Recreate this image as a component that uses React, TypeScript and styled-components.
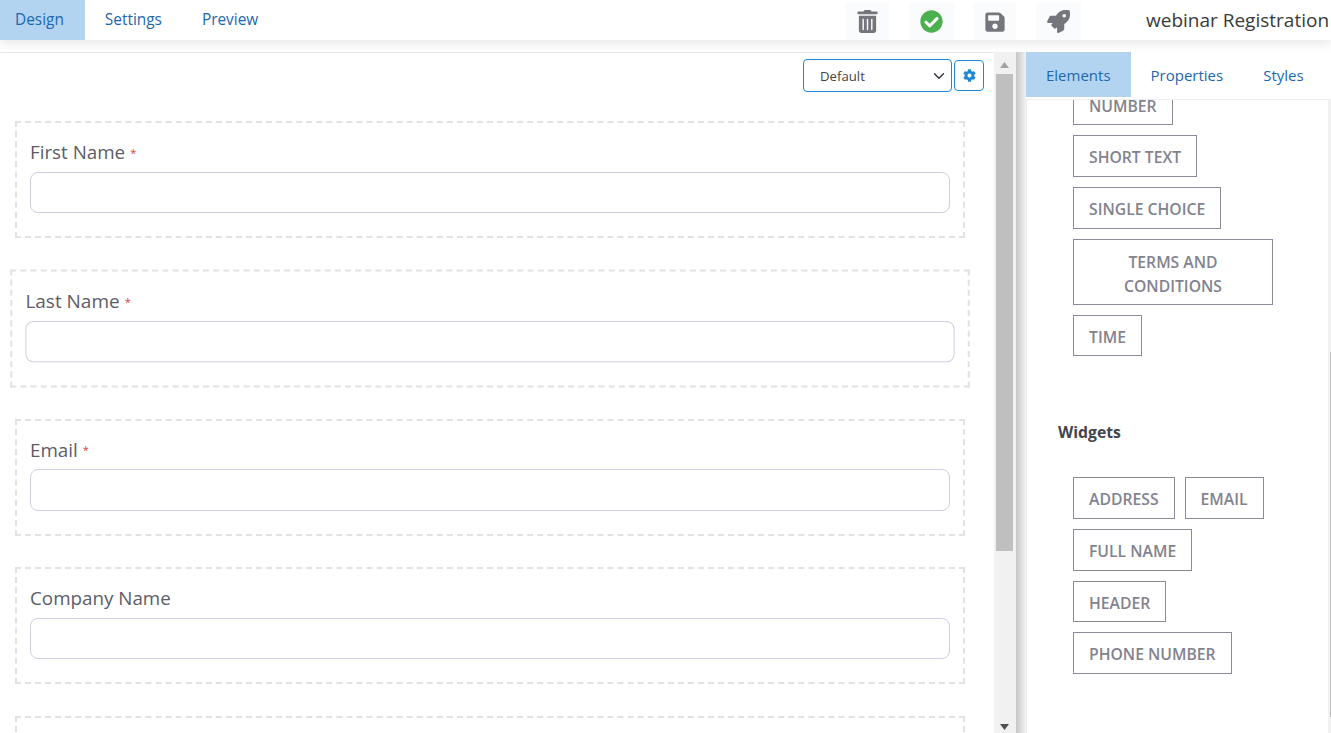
import React from "react";
import styled, { createGlobalStyle } from "styled-components";
import { FaTrashAlt, FaCheckCircle, FaSave, FaRocket, FaCog } from "react-icons/fa";

const Global = createGlobalStyle`
  html, body { margin: 0; padding: 0; height: 100%; overflow: hidden; background: #fff; }
  * { box-sizing: border-box; }
  body { font-family: "Open Sans", "Noto Sans", sans-serif; }
`;

const Page = styled.div`
  width: 1331px;
  height: 733px;
  display: flex;
  flex-direction: column;
  overflow: hidden;
`;

const TopBar = styled.header`
  height: 40px;
  flex: none;
  display: flex;
  align-items: stretch;
  background: #fff;
  box-shadow: 0 4px 10px rgba(0, 0, 0, 0.09);
  position: relative;
  z-index: 2;
`;

const TabButton = styled.div<{ $active?: boolean; $left?: number; $right?: number; $size?: number; $lift?: number }>`
  display: flex;
  align-items: center;
  padding: 0 ${(p) => p.$right ?? 20}px ${(p) => p.$lift ?? 0}px ${(p) => p.$left ?? 20}px;
  background: ${(p) => (p.$active ? "#b3d4f0" : "transparent")};
  color: #1c68ae;
  font-size: ${(p) => p.$size ?? 15}px;
  white-space: nowrap;
`;

const IconGroup = styled.div`
  margin-left: auto;
  display: flex;
  gap: 20px;
  padding-top: 3px;
`;

const IconButton = styled.div<{ $w: number; $color: string; $size: number }>`
  width: ${(p) => p.$w}px;
  height: 37px;
  display: flex;
  align-items: center;
  justify-content: center;
  background: #fafbfd;
  color: ${(p) => p.$color};
  font-size: ${(p) => p.$size}px;
`;

const Title = styled.div`
  margin-left: 65px;
  width: 185px;
  flex: none;
  display: flex;
  align-items: center;
  font-size: 19px;
  color: #3a3a3a;
  white-space: nowrap;
`;

const Workspace = styled.div`
  flex: 1;
  min-height: 0;
  margin-top: 12px;
  display: flex;
`;

const Canvas = styled.section`
  width: 994px;
  flex: none;
  border-top: 1px solid #e8e8e8;
  overflow: hidden;
`;

const CanvasTools = styled.div`
  display: flex;
  justify-content: flex-end;
  align-items: flex-start;
  gap: 2px;
  padding: 7px 10px 0 0;
  height: 68.3px;
`;

const chevron =
  "data:image/svg+xml,%3csvg xmlns='http://www.w3.org/2000/svg' viewBox='0 0 16 16'%3e%3cpath fill='none' stroke='%23343a40' stroke-linecap='round' stroke-linejoin='round' stroke-width='2' d='M2 5l6 6 6-6'/%3e%3c/svg%3e";

const LayoutSelect = styled.select`
  width: 149px;
  height: 33px;
  margin-top: -1px;
  padding: 0 0 0 16px;
  border: 1px solid #1f88d6;
  border-radius: 4px;
  appearance: none;
  background: #fff url("${chevron}") no-repeat right 4px center / 16px 12px;
  color: #444;
  font-family: inherit;
  font-size: 13.2px;
  outline: none;
`;

const GearButton = styled.div`
  width: 30px;
  height: 31px;
  border: 1px solid #1f88d6;
  border-radius: 4px;
  display: flex;
  align-items: center;
  justify-content: center;
  color: #1f88d6;
  font-size: 13px;
`;

const FieldCard = styled.div<{ $selected?: boolean }>`
  width: 950px;
  height: 116.9px;
  margin: 0 0 31.8px 15px;
  padding: 13px 13px 0;
  border: 2px dashed #e2e2e2;
  background: #fff;
  transform: ${(p) => (p.$selected ? "scale(1.01)" : "none")};
`;

const FieldLabel = styled.div`
  height: 32px;
  margin-bottom: 3.6px;
  display: flex;
  align-items: center;
  gap: 5px;
  font-size: 18.8px;
  color: #5c5c68;
`;

const Required = styled.span`
  color: #d9434e;
  font-size: 11px;
`;

const FieldInput = styled.input`
  display: block;
  width: 100%;
  height: 41.4px;
  border: 1px solid #cfcfe4;
  border-radius: 8px;
  background: #fff;
  outline: none;
`;

const Rail = styled.div`
  width: 22px;
  flex: none;
  background: #f1f1f1;
  display: flex;
  flex-direction: column;
  align-items: flex-start;
  padding-left: 2px;
`;

const RailArrow = styled.svg`
  width: 17px;
  height: 9px;
  flex: none;
  fill: #a3a3a3;
  margin-top: 9px;
  display: block;
`;

const RailThumb = styled.div`
  width: 17px;
  height: 477px;
  margin-top: 4px;
  background: #bfbfbf;
`;

const RailArrowDown = styled(RailArrow)`
  fill: #505050;
  margin-top: auto;
  margin-bottom: 2px;
`;

const Seam = styled.div`
  width: 10px;
  flex: none;
  background: linear-gradient(to right, #c6c6c6, #f3f3f3);
`;

const Palette = styled.aside`
  flex: 1;
  min-width: 0;
  display: flex;
  flex-direction: column;
`;

const PaletteTabs = styled.nav`
  height: 48px;
  flex: none;
  display: flex;
  align-items: stretch;
  padding-bottom: 2px;
  border-bottom: 1px solid #eeeeee;
`;

const PaletteBody = styled.div`
  flex: 1;
  min-height: 0;
  display: flex;
  border-left: 1px solid #ececec;
`;

const PaletteScroll = styled.div`
  flex: 1;
  min-width: 0;
  overflow: hidden;
`;

const PaletteInner = styled.div`
  margin-top: -16.27px;
`;

const ChipList = styled.div`
  display: flex;
  flex-wrap: wrap;
  gap: 10px;
  width: 205px;
  margin-left: 46px;
`;

const Chip = styled.div<{ $wide?: boolean }>`
  width: ${(p) => (p.$wide ? "200px" : "auto")};
  padding: 10px 15px 6px;
  border: 1px solid #8b8b9c;
  color: #83838f;
  font-size: 15.72px;
  font-weight: 600;
  line-height: ${(p) => (p.$wide ? "24px" : "23.67px")};
  text-align: center;
  white-space: ${(p) => (p.$wide ? "normal" : "nowrap")};
`;

const GroupTitle = styled.div`
  margin: 64.6px 0 34.4px 31px;
  height: 22px;
  line-height: 22px;
  color: #45454d;
  font-size: 15.78px;
  font-weight: 700;
`;

const MiniRail = styled.div`
  width: 3px;
  flex: none;
  background: #f1f1f1;
  display: flex;
  flex-direction: column;
  align-items: flex-end;
  padding-top: 252px;
`;

const MiniThumb = styled.div`
  width: 1px;
  height: 365px;
  background: #bdbdbd;
`;

const fields = [
  { label: "First Name", required: true },
  { label: "Last Name", required: true, selected: true },
  { label: "Email", required: true },
  { label: "Company Name" },
];

export default function App() {
  return (
    <Page>
      <Global />
      <TopBar>
        <TabButton $active $left={15} $right={21} $size={15.4} $lift={1}>Design</TabButton>
        <TabButton $size={15.4} $lift={1}>Settings</TabButton>
        <TabButton $size={15.4} $lift={1}>Preview</TabButton>
        <IconGroup>
          <IconButton $w={43} $color="#75757c" $size={23}><FaTrashAlt /></IconButton>
          <IconButton $w={45} $color="#4caf50" $size={23}><FaCheckCircle /></IconButton>
          <IconButton $w={42} $color="#75757c" $size={22}><FaSave /></IconButton>
          <IconButton $w={45} $color="#75757c" $size={23}><FaRocket /></IconButton>
        </IconGroup>
        <Title>webinar Registration</Title>
      </TopBar>
      <Workspace>
        <Canvas>
          <CanvasTools>
            <LayoutSelect defaultValue="Default">
              <option>Default</option>
            </LayoutSelect>
            <GearButton><FaCog /></GearButton>
          </CanvasTools>
          {fields.map((f) => (
            <FieldCard key={f.label} $selected={f.selected}>
              <FieldLabel>
                {f.label}
                {f.required && <Required>*</Required>}
              </FieldLabel>
              <FieldInput />
            </FieldCard>
          ))}
          <FieldCard />
        </Canvas>
        <Rail>
          <RailArrow viewBox="0 0 17 9"><polygon points="8.5,1 13,7 4,7" /></RailArrow>
          <RailThumb />
          <RailArrowDown viewBox="0 0 17 9"><polygon points="4,2 13,2 8.5,8" /></RailArrowDown>
        </Rail>
        <Seam />
        <Palette>
          <PaletteTabs>
            <TabButton $active>Elements</TabButton>
            <TabButton>Properties</TabButton>
            <TabButton>Styles</TabButton>
          </PaletteTabs>
          <PaletteBody>
            <PaletteScroll>
              <PaletteInner>
                <ChipList>
                  <Chip>NUMBER</Chip>
                  <Chip>SHORT TEXT</Chip>
                  <Chip>SINGLE CHOICE</Chip>
                  <Chip $wide>TERMS AND CONDITIONS</Chip>
                  <Chip>TIME</Chip>
                </ChipList>
                <GroupTitle>Widgets</GroupTitle>
                <ChipList>
                  <Chip>ADDRESS</Chip>
                  <Chip>EMAIL</Chip>
                  <Chip>FULL NAME</Chip>
                  <Chip>HEADER</Chip>
                  <Chip>PHONE NUMBER</Chip>
                </ChipList>
              </PaletteInner>
            </PaletteScroll>
            <MiniRail><MiniThumb /></MiniRail>
          </PaletteBody>
        </Palette>
      </Workspace>
    </Page>
  );
}
